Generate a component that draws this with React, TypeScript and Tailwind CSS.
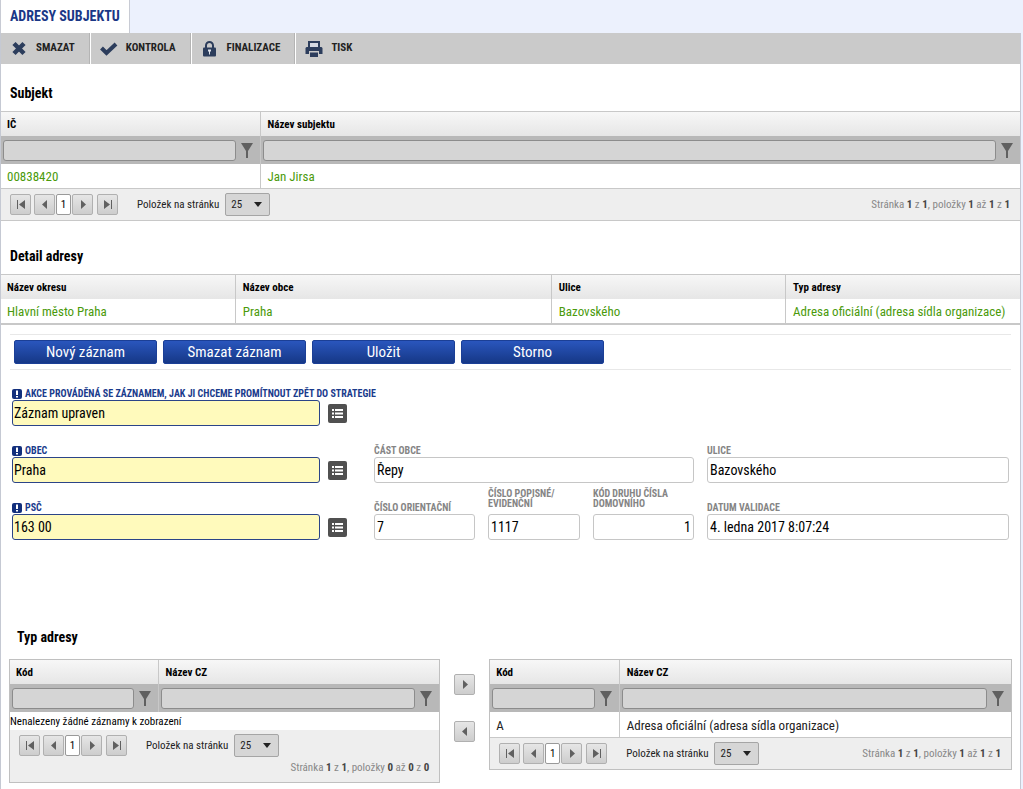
import type { ReactNode } from 'react'
import clsx from 'clsx'

interface Column {
  title: string
  width: string
}

interface GridProps {
  label: string
  columns: Column[]
  rows: string[][]
  filter?: boolean
  small?: boolean
  className?: string
}

interface PagerProps {
  id: string
  from: number
  to: number
  total: number
  wrap?: boolean
  className?: string
}

interface FieldProps {
  id: string
  label: string
  value: string
  required?: boolean
  stacked?: boolean
  alignRight?: boolean
}

const arrows = {
  first: 'M1 0h1v9H1zM9 0v9L3 4.5z',
  prev: 'M7 0v9L2 4.5z',
  next: 'M3 0v9l5-4.5z',
  last: 'M1 0v9l6-4.5zM8 0h1v9H8z',
}

function ArrowButton({ type, label }: { type: keyof typeof arrows; label: string }) {
  return (
    <button
      type="button"
      aria-label={label}
      className="flex h-[21px] w-[21px] shrink-0 items-center justify-center rounded-xs border border-[#b0b0b0] bg-linear-to-b from-[#e6e6e6] to-[#cdcdcd]"
    >
      <svg width="10" height="9" viewBox="0 0 10 9" fill="#606060">
        <path d={arrows[type]} />
      </svg>
    </button>
  )
}

function FilterIcon() {
  return (
    <svg width="12" height="15" viewBox="0 0 12 15" fill="#606060">
      <path d="M0 0h12L7 8v7H5V8z" />
    </svg>
  )
}

function Grid({ label, columns, rows, filter, small, className }: GridProps) {
  return (
    <table aria-label={label} className="w-full table-fixed border-collapse text-left">
      <colgroup>
        {columns.map((col, i) => (
          <col key={i} className={col.width} />
        ))}
      </colgroup>
      <thead>
        <tr className="h-[24px] bg-linear-to-b from-[#f7f7f7] to-[#e6e6e6]">
          {columns.map((col, i) => (
            <th
              key={i}
              scope="col"
              className={clsx('pt-[2px] text-[11px] leading-[16px] font-bold', i > 0 ? 'border-l border-[#c8c8c8] pl-[7px]' : 'pl-[6px]')}
            >
              {col.title}
            </th>
          ))}
        </tr>
        {filter && (
          <tr className="h-[28px] bg-[#b8b8b8]">
            {columns.map((col, i) => (
              <td key={i} className={clsx('pr-[7px] pl-[2px]', i > 0 && 'border-l border-[#c8c8c8]')}>
                <div className="flex items-center gap-[5px]">
                  <input
                    aria-label={`Filtr ${col.title}`}
                    className="h-[21px] min-w-0 flex-1 rounded-[3px] border border-[#8c8c8c] bg-[#d5d5d5] px-1 text-[11px]"
                  />
                  <button type="button" aria-label={`Filtrovat ${col.title}`}>
                    <FilterIcon />
                  </button>
                </div>
              </td>
            ))}
          </tr>
        )}
      </thead>
      <tbody>
        {rows.map((row, r) => (
          <tr key={r} className={small ? 'h-[25px]' : 'h-[24px]'}>
            {row.map((cell, i) => (
              <td
                key={i}
                className={clsx(
                  'pt-[2px] text-[13px] leading-[20px] whitespace-nowrap',
                  i > 0 ? 'border-l border-[#c8c8c8] pl-[7px]' : 'pl-[6px]',
                  className,
                )}
              >
                {cell}
              </td>
            ))}
          </tr>
        ))}
        {rows.length === 0 && (
          <tr className="h-[18px]">
            <td colSpan={columns.length} className="pt-[2px] text-[11px] leading-[16px]">
              Nenalezeny žádné záznamy k zobrazení
            </td>
          </tr>
        )}
      </tbody>
    </table>
  )
}

function Pager({ id, from, to, total, wrap, className }: PagerProps) {
  return (
    <div className={clsx('flex flex-wrap items-center bg-[#eee] pr-[10px] pl-[9px] text-[11px] leading-[16px] text-[#222]', className)}>
      <div className="flex items-center">
        <ArrowButton type="first" label="První stránka" />
        <div className="mr-1 ml-[3px] flex items-center gap-px">
          <ArrowButton type="prev" label="Předchozí stránka" />
          <button type="button" className="h-[21px] w-[15px] rounded-xs border border-[#999] bg-white text-center text-black">
            1
          </button>
          <ArrowButton type="next" label="Další stránka" />
        </div>
        <ArrowButton type="last" label="Poslední stránka" />
      </div>
      <label htmlFor={id} className="ml-[19px]">
        Položek na stránku
      </label>
      <div className="relative ml-[6px]">
        <select id={id} defaultValue="25" className="block h-[23px] w-[45px] appearance-none rounded-xs border border-[#a5a5a5] bg-[#d6d6d6] pl-[5px]">
          <option>10</option>
          <option>25</option>
          <option>50</option>
        </select>
        <svg className="pointer-events-none absolute top-[9px] right-[8px]" width="8" height="5" viewBox="0 0 8 5">
          <path d="M0 0h8L4 5z" fill="#222" />
        </svg>
      </div>
      <p className={clsx('text-[#888] [&>b]:font-bold [&>b]:text-[#444]', wrap ? 'basis-full text-right' : 'ml-auto')}>
        Stránka <b>1</b> z <b>1</b>, položky <b>{from}</b> až <b>{to}</b> z <b>{total}</b>
      </p>
    </div>
  )
}

function ToolbarButton({ icon, children }: { icon: ReactNode; children: string }) {
  return (
    <button
      type="button"
      className="flex items-center gap-2 border-r border-white pr-[15px] pl-[9px] text-[11px] font-bold text-[#222] shadow-[inset_-1px_0_0_#b4b4b4] last:border-r-0 last:shadow-none"
    >
      {icon}
      {children}
    </button>
  )
}

function Field({ id, label, value, required, stacked, alignRight }: FieldProps) {
  return (
    <div>
      <div className="flex h-[25px] items-end">
        <label
          htmlFor={id}
          className={clsx(
            'flex items-center gap-[3px] text-[10px] font-bold whitespace-pre uppercase',
            stacked ? 'self-start leading-[10px]' : 'leading-[13px]',
            required ? 'text-[#1a3b8c]' : 'text-[#858585]',
          )}
        >
          {required && (
            <svg width="10" height="10" viewBox="0 0 10 10">
              <rect width="10" height="10" rx="2" fill="#122f7c" />
              <path d="M4 1.5h2V6H4zM4 7h2v1.5H4z" fill="#fff" />
            </svg>
          )}
          {label}
        </label>
      </div>
      <div className="flex items-center gap-2">
        <input
          id={id}
          defaultValue={value}
          className={clsx(
            'h-[26px] w-full min-w-0 rounded-[3px] border px-[2px] text-[14px] text-black',
            required ? 'border-[#2b4488] bg-[#fffabc] pl-px' : 'border-[#c6c6c6] bg-white',
            alignRight && 'text-right',
          )}
        />
        {required && (
          <button type="button" aria-label={`Vybrat ${label}`} className="flex h-[19px] w-[19px] shrink-0 items-center justify-center rounded-xs bg-[#505050]">
            <svg width="11" height="9" viewBox="0 0 11 9" fill="#fff">
              <path d="M0 0h2v2H0zM3 0h8v2H3zM0 3.500h2v2H0zM3 3.500h8v2H3zM0 7h2v2H0zM3 7h8v2H3z" />
            </svg>
          </button>
        )}
      </div>
    </div>
  )
}

const actions = ['Nový záznam', 'Smazat záznam', 'Uložit', 'Storno']

export default function App() {
  return (
    <div className="min-h-screen bg-[#ecf1fd] pr-[2px] font-['Roboto_Condensed','Roboto',sans-serif] text-black">
      <nav className="flex h-[33px]">
        <a href="#adresy" className="flex items-center border-x border-[#c8cbd4] bg-white px-[9px] text-[14px] font-bold text-[#1a3786]">
          ADRESY SUBJEKTU
        </a>
      </nav>

      <main className="min-h-[756px] border-x border-[#c5c9d3] bg-white">
        {/* Toolbar */}
        <div className="flex h-[31px] bg-[#cacaca]">
          <ToolbarButton
            icon={
              <svg width="18" height="16" viewBox="0 0 18 16">
                <path d="M4 2.500l10 10M14 2.500l-10 10" stroke="#2c3d5c" strokeWidth="4.500" />
              </svg>
            }
          >
            SMAZAT
          </ToolbarButton>
          <ToolbarButton
            icon={
              <svg width="18" height="16" viewBox="0 0 18 16">
                <path d="M1.500 7l5 5L16 3" fill="none" stroke="#2c3d5c" strokeWidth="4" />
              </svg>
            }
          >
            KONTROLA
          </ToolbarButton>
          <ToolbarButton
            icon={
              <svg width="18" height="16" viewBox="0 0 18 16">
                <path d="M5 8V4.500a3.500 3.500 0 0 1 7 0V8" fill="none" stroke="#2c3d5c" strokeWidth="2" />
                <rect x="2" y="6.500" width="13" height="9" rx="1" fill="#2c3d5c" />
                <path d="M7 8.500h3v2H9v3H8v-3H7z" fill="#dfe3ec" />
              </svg>
            }
          >
            FINALIZACE
          </ToolbarButton>
          <ToolbarButton
            icon={
              <svg width="18" height="16" viewBox="0 0 18 16">
                <path d="M4 6V1h10v5" fill="#d5d9e2" stroke="#2c3d5c" strokeWidth="2" />
                <path d="M1.500 6h15l1 1v6H14v-3H4v3H.5V7z" fill="#2c3d5c" />
                <path d="M5 11.500h8V16H5z" fill="#2c3d5c" />
              </svg>
            }
          >
            TISK
          </ToolbarButton>
        </div>

        {/* Subjekt */}
        <h2 className="px-[9px] pt-[19px] pb-[8px] text-[14px] leading-[20px] font-bold">Subjekt</h2>
        <div className="border-y border-[#c8c8c8]">
          <Grid
            label="Subjekt"
            filter
            columns={[
              { title: 'IČ', width: 'w-[259px]' },
              { title: 'Název subjektu', width: 'w-auto' },
            ]}
            rows={[['00838420', 'Jan Jirsa']]}
            className="text-[#4a9a0b]"
          />
          <Pager id="subjekt-size" from={1} to={1} total={1} className="h-[32px] border-t border-[#c8c8c8]" />
        </div>

        {/* Detail adresy */}
        <h2 className="px-[9px] pt-[25px] pb-[8px] text-[14px] leading-[20px] font-bold">Detail adresy</h2>
        <div className="border-t border-b-2 border-[#c8c8c8]">
          <Grid
            label="Detail adresy"
            columns={[
              { title: 'Název okresu', width: 'w-[23%]' },
              { title: 'Název obce', width: 'w-[31%]' },
              { title: 'Ulice', width: 'w-[23%]' },
              { title: 'Typ adresy', width: 'w-[23%]' },
            ]}
            rows={[['Hlavní město Praha', 'Praha', 'Bazovského', 'Adresa oficiální (adresa sídla organizace)']]}
            className="text-[#4a9a0b]"
          />
        </div>

        <div className="mx-[9px] mt-[9px] flex gap-[6px] border-y border-[#e8e8e8] px-1 py-[5px]">
          {actions.map(action => (
            <button
              key={action}
              type="button"
              className="h-[24px] w-[143px] rounded-xs border border-[#1b3f96] bg-linear-to-b from-[#2a56bd] to-[#163887] text-[15px] leading-[20px] text-white"
            >
              {action}
            </button>
          ))}
        </div>

        {/* Formular */}
        <form className="grid grid-cols-[minmax(0,349fr)_minmax(0,320fr)_minmax(0,302fr)] gap-x-[13px] gap-y-[6px] pt-[5px] pr-[11px] pl-[11px]">
          <div className="pr-[14px]">
            <Field id="akce" label="Akce prováděná se záznamem, jak ji chceme promítnout zpět do strategie" value="Záznam upraven" required />
          </div>
          <div className="col-start-1 pr-[14px]">
            <Field id="obec" label="Obec" value="Praha" required />
          </div>
          <Field id="cast-obce" label="Část obce" value="Řepy" />
          <Field id="ulice" label="Ulice" value="Bazovského" />
          <div className="pr-[14px]">
            <Field id="psc" label="PSČ" value="163 00" required />
          </div>
          <div className="grid grid-cols-[minmax(0,101fr)_minmax(0,92fr)_minmax(0,101fr)] gap-[13px]">
            <Field id="orientacni" label="Číslo orientační" value="7" />
            <Field id="popisne" label={'Číslo popisné/\nevidenční'} value="1117" stacked />
            <Field id="druh" label={'Kód druhu čísla\ndomovního'} value="1" stacked alignRight />
          </div>
          <Field id="validace" label="Datum validace" value="4. ledna 2017 8:07:24" />
        </form>

        {/* Typ adresy */}
        <h2 className="px-[16px] pt-[87px] pb-[12px] text-[14px] leading-[20px] font-bold">Typ adresy</h2>
        <div className="flex items-start pr-[8px] pl-[8px]">
          <div className="flex-[431] border border-[#c0c0c0]">
            <Grid
              label="Dostupné typy adresy"
              filter
              small
              columns={[
                { title: 'Kód', width: 'w-[148px]' },
                { title: 'Název CZ', width: 'w-auto' },
              ]}
              rows={[]}
            />
            <Pager id="dostupne-size" from={0} to={0} total={0} wrap className="gap-y-[3px] pt-1 pb-[6px]" />
          </div>
          <div className="flex w-[49px] shrink-0 flex-col items-center gap-[26px] pt-[15px]">
            <ArrowButton type="next" label="Přidat" />
            <ArrowButton type="prev" label="Odebrat" />
          </div>
          <div className="flex-[523] border border-[#c0c0c0]">
            <Grid
              label="Vybrané typy adresy"
              filter
              small
              columns={[
                { title: 'Kód', width: 'w-[129px]' },
                { title: 'Název CZ', width: 'w-auto' },
              ]}
              rows={[['A', 'Adresa oficiální (adresa sídla organizace)']]}
              className="text-[#222]"
            />
            <Pager id="vybrane-size" from={1} to={1} total={1} className="h-[32px] border-t border-[#c8c8c8]" />
          </div>
        </div>
      </main>
    </div>
  )
}
